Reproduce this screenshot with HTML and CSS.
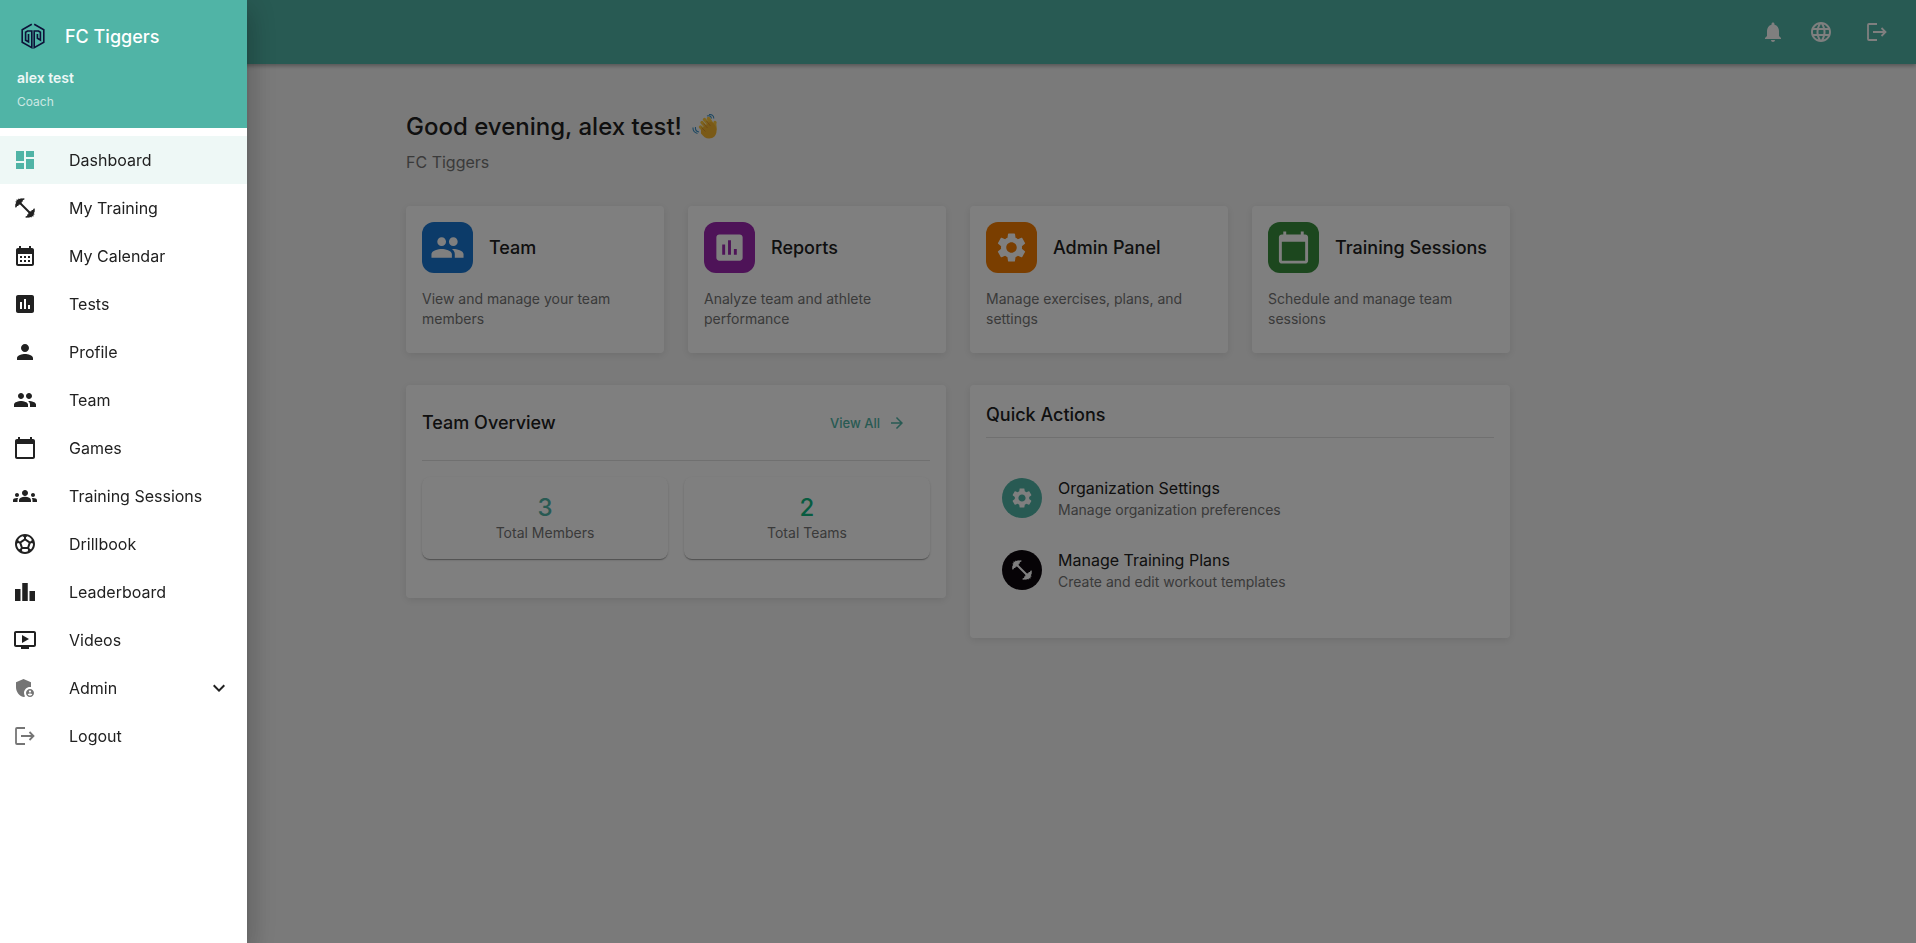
FILE: index.html
```
<!DOCTYPE html>
<html lang="en">
<head>
  <meta charset="UTF-8" />
  <meta name="viewport" content="width=device-width, initial-scale=1.0"/>
  <title>FC Tiggers</title>
  <link rel="stylesheet" href="styles.css">
</head>
<body>

  <!-- shared icons -->
  <svg class="sprite" aria-hidden="true">
    <symbol id="i-dashboard" viewBox="0 0 24 24"><path d="M3 13h8V3H3v10zm0 8h8v-6H3v6zm10 0h8V11h-8v10zm0-18v6h8V3h-8z"/></symbol>
    <symbol id="i-fitness" viewBox="0 0 24 24"><path d="M7 7 17 17" fill="none" stroke="currentColor" stroke-width="1.900"/><path d="M2.300 8.200 3.200 6.800 2.200 5.800 3.600 5.200 3.400 3.600 5 3.800 5.600 2.400 6.800 3 8 2.200 8.800 2.400 11.400 2.200 11.300 3.700 9.800 4.100 9.900 5.400 8.700 5.800 8.600 7.300 7.300 8.600 5.700 8.700 5.300 10 4 9.900 3.600 11.300 2.200 11.400z"/><path d="M21.700 15.800 20.800 17.200 21.800 18.200 20.400 18.800 20.600 20.400 19 20.200 18.400 21.600 17.200 21 16 21.800 15.200 21.600 12.600 21.800 12.700 20.300 14.200 19.900 14.100 18.600 15.300 18.200 15.400 16.700 16.700 15.400 18.300 15.300 18.700 14 20 14.100 20.400 12.700 21.800 12.600z"/></symbol>
    <symbol id="i-calendar-month" viewBox="0 0 24 24"><path d="M19 4h-1V2h-2v2H8V2H6v2H5c-1.110 0-1.990.9-1.990 2L3 20c0 1.100.89 2 2 2h14c1.100 0 2-.9 2-2V6c0-1.100-.9-2-2-2zm0 16H5V10h14v10zM9 14H7v-2h2v2zm4 0h-2v-2h2v2zm4 0h-2v-2h2v2zm-8 4H7v-2h2v2zm4 0h-2v-2h2v2zm4 0h-2v-2h2v2z"/></symbol>
    <symbol id="i-assessment" viewBox="0 0 24 24"><path d="M19 3H5c-1.100 0-2 .9-2 2v14c0 1.100.9 2 2 2h14c1.100 0 2-.9 2-2V5c0-1.100-.9-2-2-2zM9 17H7v-7h2v7zm4 0h-2V7h2v10zm4 0h-2v-4h2v4z"/></symbol>
    <symbol id="i-person" viewBox="0 0 24 24"><path d="M12 12c2.210 0 4-1.790 4-4s-1.790-4-4-4-4 1.790-4 4 1.790 4 4 4zm0 2c-2.670 0-8 1.340-8 4v2h16v-2c0-2.660-5.330-4-8-4z"/></symbol>
    <symbol id="i-people" viewBox="0 0 24 24"><path d="M16 11c1.660 0 2.990-1.340 2.990-3S17.660 5 16 5c-1.660 0-3 1.340-3 3s1.340 3 3 3zm-8 0c1.660 0 2.990-1.340 2.990-3S9.660 5 8 5C6.340 5 5 6.340 5 8s1.340 3 3 3zm0 2c-2.330 0-7 1.170-7 3.500V19h14v-2.500c0-2.330-4.670-3.500-7-3.500zm8 0c-.29 0-.62.02-.97.05 1.160.84 1.970 1.970 1.970 3.450V19h6v-2.500c0-2.330-4.670-3.500-7-3.500z"/></symbol>
    <symbol id="i-calendar" viewBox="0 0 24 24"><path d="M20 3h-1V1h-2v2H7V1H5v2H4c-1.100 0-2 .9-2 2v16c0 1.100.9 2 2 2h16c1.100 0 2-.9 2-2V5c0-1.100-.9-2-2-2zm0 18H4V8h16v13z"/></symbol>
    <symbol id="i-groups" viewBox="0 0 24 24"><path d="M12 12.750c1.630 0 3.070.39 4.240.9 1.080.48 1.760 1.560 1.760 2.730V18H6v-1.610c0-1.180.68-2.260 1.760-2.730 1.170-.52 2.610-.91 4.240-.91zM4 13c1.100 0 2-.9 2-2s-.9-2-2-2-2 .9-2 2 .9 2 2 2zm1.130 1.100c-.37-.06-.74-.1-1.130-.1-.99 0-1.930.21-2.780.58C.48 14.900 0 15.620 0 16.430V18h4.500v-1.610c0-.83.23-1.610.63-2.290zM20 13c1.100 0 2-.9 2-2s-.9-2-2-2-2 .9-2 2 .9 2 2 2zm4 3.430c0-.81-.48-1.530-1.220-1.850-.85-.37-1.790-.58-2.780-.58-.39 0-.76.04-1.130.1.400.68.630 1.460.630 2.290V18H24v-1.570zM12 6c1.660 0 3 1.340 3 3s-1.340 3-3 3-3-1.340-3-3 1.340-3 3-3z"/></symbol>
    <symbol id="i-soccer" viewBox="0 0 24 24"><path d="M12 2C6.480 2 2 6.480 2 12s4.480 10 10 10 10-4.480 10-10S17.520 2 12 2zm1 3.300l1.350-.95c1.820.56 3.370 1.760 4.380 3.340l-.39 1.340-1.350.46L13 6.700V5.300zm-3.350-.95L11 5.300v1.400L7.010 9.490l-1.350-.46-.39-1.340c1.010-1.570 2.560-2.770 4.380-3.340zM7.080 17.110l-1.140.1C4.730 15.810 4 13.990 4 12c0-.12.010-.23.020-.35l1-.73 1.380.48 1.460 4.340-.78 1.370zm7.420 2.480c-.79.26-1.630.41-2.500.41s-1.710-.15-2.500-.41l-.69-1.490.64-1.100h5.110l.64 1.110-.7 1.480zM14.270 15H9.730l-1.350-4.020L12 8.440l3.630 2.540L14.270 15zm3.790 2.210l-1.140-.1-.79-1.370 1.460-4.340 1.390-.47 1 .73c.01.11.02.22.02.34 0 1.990-.73 3.810-1.940 5.210z"/></symbol>
    <symbol id="i-leaderboard" viewBox="0 0 24 24"><path d="M2 9h5.500v12H2zM9.250 3h5.500v18h-5.500zM16.500 11H22v10h-5.500z"/></symbol>
    <symbol id="i-video" viewBox="0 0 24 24"><path d="M21 3H3c-1.110 0-2 .89-2 2v12c0 1.100.89 2 2 2h5v2h8v-2h5c1.100 0 1.990-.9 1.990-2L23 5c0-1.110-.9-2-2-2zm0 14H3V5h18v12zm-5-6l-7 4V7z"/></symbol>
    <symbol id="i-admin" viewBox="0 0 24 24"><path d="M17 11c.34 0 .67.04 1 .09V6.270L10.500 3 3 6.270v4.910c0 4.540 3.200 8.790 7.500 9.820.55-.13 1.080-.32 1.600-.55-.69-.98-1.100-2.170-1.100-3.450 0-3.310 2.690-6 6-6z"/><path d="M17 13c-2.210 0-4 1.790-4 4s1.790 4 4 4 4-1.790 4-4-1.790-4-4-4zm0 1.380c.62 0 1.120.51 1.120 1.120s-.51 1.120-1.120 1.120-1.120-.51-1.120-1.120.5-1.120 1.120-1.120zm0 5.370c-.93 0-1.740-.46-2.240-1.170.05-.72 1.510-1.080 2.240-1.080s2.190.36 2.240 1.080c-.5.71-1.310 1.170-2.240 1.170z"/></symbol>
    <symbol id="i-logout" viewBox="0 0 24 24"><path d="M12 4H4a1 1 0 0 0-1 1v14a1 1 0 0 0 1 1h8M8 12h12.500M16.500 8l4 4-4 4" fill="none" stroke="currentColor" stroke-width="1.800"/></symbol>
    <symbol id="i-chevron" viewBox="0 0 24 24"><path d="M7.410 8.590 12 13.170l4.590-4.580L18 10l-6 6-6-6 1.410-1.410z"/></symbol>
    <symbol id="i-bell" viewBox="0 0 24 24"><path d="M12 22c1.100 0 2-.9 2-2h-4c0 1.100.89 2 2 2zm6-6v-5c0-3.070-1.640-5.640-4.500-6.320V4c0-.83-.67-1.500-1.500-1.500s-1.500.67-1.500 1.500v.68C7.630 5.360 6 7.920 6 11v5l-2 2v1h16v-1l-2-2z"/></symbol>
    <symbol id="i-globe" viewBox="0 0 24 24"><path d="M11.990 2C6.470 2 2 6.480 2 12s4.470 10 9.990 10C17.520 22 22 17.520 22 12S17.520 2 11.990 2zm6.930 6h-2.950c-.32-1.250-.78-2.450-1.380-3.560 1.840.63 3.370 1.910 4.330 3.560zM12 4.040c.83 1.200 1.480 2.530 1.910 3.960h-3.820c.43-1.430 1.080-2.760 1.910-3.960zM4.260 14C4.100 13.360 4 12.690 4 12s.1-1.360.26-2h3.380c-.08.66-.14 1.320-.14 2s.06 1.340.14 2H4.260zm.82 2h2.950c.32 1.250.78 2.450 1.380 3.560-1.840-.63-3.370-1.900-4.330-3.560zm2.950-8H5.080c.96-1.660 2.490-2.930 4.330-3.560C8.810 5.550 8.350 6.750 8.030 8zM12 19.960c-.83-1.200-1.480-2.530-1.910-3.960h3.820c-.43 1.430-1.080 2.760-1.910 3.960zM14.340 14H9.660c-.09-.66-.16-1.320-.16-2s.07-1.350.16-2h4.680c.09.65.16 1.320.16 2s-.07 1.340-.16 2zm.25 5.560c.6-1.110 1.060-2.310 1.380-3.560h2.950c-.96 1.650-2.490 2.930-4.330 3.560zM16.360 14c.08-.66.14-1.320.14-2s-.06-1.340-.14-2h3.380c.16.64.26 1.310.26 2s-.1 1.360-.26 2h-3.380z"/></symbol>
    <symbol id="i-settings" viewBox="0 0 24 24"><path d="M19.140 12.940c.04-.3.06-.61.06-.94 0-.32-.02-.64-.07-.94l2.030-1.580c.18-.14.23-.41.12-.61l-1.920-3.320c-.12-.22-.37-.29-.59-.22l-2.390.96c-.5-.38-1.030-.7-1.620-.94l-.36-2.540c-.04-.24-.24-.41-.48-.41h-3.840c-.24 0-.43.17-.47.41l-.36 2.540c-.59.24-1.130.57-1.620.94l-2.390-.96c-.22-.08-.47 0-.59.22L2.740 8.870c-.12.21-.08.47.12.61l2.030 1.580c-.05.3-.09.63-.09.94s.02.64.07.94l-2.030 1.580c-.18.14-.23.41-.12.61l1.920 3.320c.12.22.37.29.59.22l2.390-.96c.5.38 1.030.7 1.620.94l.36 2.540c.05.24.24.41.48.41h3.840c.24 0 .44-.17.47-.41l.36-2.540c.59-.24 1.130-.56 1.620-.94l2.390.96c.22.08.47 0 .59-.22l1.920-3.320c.12-.22.07-.47-.12-.61l-2.010-1.580zM12 15.600c-1.980 0-3.600-1.620-3.600-3.600s1.620-3.600 3.600-3.600 3.600 1.620 3.600 3.600-1.620 3.600-3.600 3.600z"/></symbol>
    <symbol id="i-arrow" viewBox="0 0 24 24"><path d="M12 4l-1.410 1.410L16.170 11H4v2h12.170l-5.580 5.590L12 20l8-8z"/></symbol>
  </svg>

  <header class="topbar">
    <button class="icon-btn" aria-label="Notifications"><svg class="icon"><use href="#i-bell"/></svg></button>
    <button class="icon-btn" aria-label="Language"><svg class="icon"><use href="#i-globe"/></svg></button>
    <button class="icon-btn last" aria-label="Logout"><svg class="icon"><use href="#i-logout"/></svg></button>
  </header>

  <main class="container">
    <h1 class="greeting">Good evening, alex test!
      <svg class="wave" viewBox="0 0 26 26" aria-hidden="true">
        <g stroke="#ffc83d" stroke-width="3.400" stroke-linecap="round" fill="none">
          <path d="M10 8.500l6 7M12.500 5.500l6 7M16.500 4.500l5 8M8.500 13l6 6"/>
          <path d="M23 8.500c-1 2 .4 4 0 7"/>
        </g>
        <path d="M9 15l9-7.500c4 1 6.500 5 6.500 9.500 0 4.500-3 7.500-7.500 7.500-3.500 0-5.500-2-8-5z" fill="#f5b52e"/>
        <path d="M11.500 9.500l4 4.500M14.500 7l4 5M9.500 13.500l4 4" stroke="#d98a2b" stroke-width=".8" fill="none"/>
        <path d="M15 2c2-.8 4 .2 4.500 2.500M17 .6c3-.4 4.800 1.400 4.800 3.800M3.500 13c-.4 2.500 1 4.500 3.500 5M1 13.500c-.2 3 1.500 5.300 4.500 6" stroke="#3a8fc4" stroke-width="1.100" fill="none"/>
      </svg>
    </h1>
    <p class="org">FC Tiggers</p>

    <section class="tiles">
      <a class="card tile" href="#">
        <span class="tile-head"><span class="tile-icon blue"><svg class="icon"><use href="#i-people"/></svg></span><span class="card-title">Team</span></span>
        <span class="desc">View and manage your team members</span>
      </a>
      <a class="card tile" href="#">
        <span class="tile-head"><span class="tile-icon purple"><svg class="icon"><use href="#i-assessment"/></svg></span><span class="card-title">Reports</span></span>
        <span class="desc">Analyze team and athlete performance</span>
      </a>
      <a class="card tile" href="#">
        <span class="tile-head"><span class="tile-icon orange"><svg class="icon"><use href="#i-settings"/></svg></span><span class="card-title">Admin Panel</span></span>
        <span class="desc">Manage exercises, plans, and settings</span>
      </a>
      <a class="card tile" href="#">
        <span class="tile-head"><span class="tile-icon green"><svg class="icon"><use href="#i-calendar"/></svg></span><span class="card-title">Training Sessions</span></span>
        <span class="desc">Schedule and manage team sessions</span>
      </a>
    </section>

    <section class="panels">
      <div class="card overview">
        <div class="overview-head">
          <h2 class="card-title">Team Overview</h2>
          <a class="view-all" href="#">View All <svg class="icon"><use href="#i-arrow"/></svg></a>
        </div>
        <div class="stats">
          <div class="stat"><span class="stat-num">3</span><span class="stat-label">Total Members</span></div>
          <div class="stat"><span class="stat-num teams">2</span><span class="stat-label">Total Teams</span></div>
        </div>
      </div>

      <div class="card actions">
        <h2 class="card-title actions-head">Quick Actions</h2>
        <a class="action" href="#">
          <span class="round"><svg class="icon"><use href="#i-settings"/></svg></span>
          <span class="action-text"><span class="action-name">Organization Settings</span><span class="action-sub">Manage organization preferences</span></span>
        </a>
        <a class="action" href="#">
          <span class="round dark"><svg class="icon"><use href="#i-fitness"/></svg></span>
          <span class="action-text"><span class="action-name">Manage Training Plans</span><span class="action-sub">Create and edit workout templates</span></span>
        </a>
      </div>
    </section>
  </main>

  <div class="backdrop"></div>

  <aside class="drawer">
    <div class="drawer-head">
      <div class="brand">
        <svg class="logo" viewBox="0 0 24 26" fill="none" stroke="#0d1238" stroke-width="1.600" aria-hidden="true">
          <path d="M10.800 1.200 1.200 6.800v12.400l9.600 5.400V8H6.500L4.600 9.200v8l2.900 1.600V11"/>
          <path d="M13.200 1.200l9.600 5.600v12.400l-9.600 5.400V8h4.300l1.900 1.200v7.800l-3-1.800V11"/>
        </svg>
        <span class="brand-name">FC Tiggers</span>
      </div>
      <div class="user-name">alex test</div>
      <div class="user-role">Coach</div>
    </div>
    <nav class="menu">
      <a class="item active" href="#"><svg class="icon"><use href="#i-dashboard"/></svg>Dashboard</a>
      <a class="item" href="#"><svg class="icon"><use href="#i-fitness"/></svg>My Training</a>
      <a class="item" href="#"><svg class="icon"><use href="#i-calendar-month"/></svg>My Calendar</a>
      <a class="item" href="#"><svg class="icon"><use href="#i-assessment"/></svg>Tests</a>
      <a class="item" href="#"><svg class="icon"><use href="#i-person"/></svg>Profile</a>
      <a class="item" href="#"><svg class="icon"><use href="#i-people"/></svg>Team</a>
      <a class="item" href="#"><svg class="icon"><use href="#i-calendar"/></svg>Games</a>
      <a class="item" href="#"><svg class="icon"><use href="#i-groups"/></svg>Training Sessions</a>
      <a class="item" href="#"><svg class="icon"><use href="#i-soccer"/></svg>Drillbook</a>
      <a class="item" href="#"><svg class="icon"><use href="#i-leaderboard"/></svg>Leaderboard</a>
      <a class="item" href="#"><svg class="icon"><use href="#i-video"/></svg>Videos</a>
      <button class="item muted" aria-expanded="false"><svg class="icon"><use href="#i-admin"/></svg>Admin<svg class="icon chevron"><use href="#i-chevron"/></svg></button>
      <button class="item muted"><svg class="icon"><use href="#i-logout"/></svg>Logout</button>
    </nav>
  </aside>

</body>
</html>
```
FILE: styles.css
```
* {
  box-sizing: border-box;
}
body {
  margin: 0;
  min-height: 100vh;
  font-family: Inter, sans-serif;
  font-size: 16px;
  background: #f5f5f5;
  color: #212121;
}
a {
  color: inherit;
  text-decoration: none;
}
button {
  font: inherit;
  color: inherit;
  background: none;
  border: none;
  cursor: pointer;
}
.sprite {
  display: none;
}
.icon {
  width: 24px;
  height: 24px;
  fill: currentColor;
  flex-shrink: 0;
}

/* top bar */
.topbar {
  display: flex;
  justify-content: flex-end;
  align-items: center;
  height: 64px;
  padding: 0 15px;
  background: #50b4a6;
  color: #fff;
  box-shadow: 0 2px 4px rgba(0, 0, 0, 0.3);
}
.icon-btn {
  display: flex;
  justify-content: center;
  width: 48px;
  padding: 12px 0;
}
.icon-btn.last {
  margin-left: 8px;
}

/* page */
.container {
  max-width: 1152px;
  margin: 0 auto;
  padding: 48px 24px;
}
.greeting {
  display: flex;
  align-items: center;
  gap: 10px;
  margin: 0;
  font-size: 24px;
  line-height: 30px;
  font-weight: 500;
}
.wave {
  width: 26px;
  height: 26px;
}
.org {
  margin: 8px 0 32px;
  line-height: 24px;
  color: #757575;
}
.card {
  background: #fff;
  border-radius: 4px;
  padding: 16px;
  box-shadow: 0 2px 8px rgba(0, 0, 0, 0.1);
}
.card-title {
  margin: 0;
  font-size: 18px;
  line-height: 28px;
  font-weight: 500;
}
.tiles {
  display: grid;
  grid-template-columns: repeat(4, 1fr);
  gap: 24px;
}
.tile {
  padding-bottom: 24px;
}
.tile-head {
  display: flex;
  align-items: center;
  gap: 16px;
  margin-bottom: 16px;
}
.tile-icon {
  display: flex;
  padding: 8px;
  border-radius: 12px;
  color: #fff;
}
.tile-icon .icon {
  width: 35px;
  height: 35px;
}
.blue { background: #1976d2; }
.purple { background: #9c27b0; }
.orange { background: #f57c00; }
.green { background: #388e3c; }
.desc {
  display: block;
  font-size: 14px;
  line-height: 20px;
  color: #757575;
}

.panels {
  display: grid;
  grid-template-columns: 1fr 1fr;
  align-items: start;
  gap: 24px;
  margin-top: 32px;
}
.overview {
  padding-bottom: 39px;
}
.overview-head {
  display: flex;
  justify-content: space-between;
  align-items: center;
  height: 60px;
  padding-bottom: 16px;
  border-bottom: 1px solid #e0e0e0;
}
.view-all {
  display: flex;
  align-items: center;
  gap: 8px;
  padding-right: 24px;
  font-size: 13px;
  font-weight: 500;
  color: #50b4a6;
}
.view-all .icon {
  width: 18px;
  height: 18px;
}
.stats {
  display: grid;
  grid-template-columns: 1fr 1fr;
  gap: 16px;
  margin-top: 16px;
}
.stat {
  display: flex;
  flex-direction: column;
  align-items: center;
  padding: 16px;
  border-radius: 8px;
  box-shadow: 0 2px 1px -1px rgba(0, 0, 0, 0.2), 0 1px 1px rgba(0, 0, 0, 0.14), 0 1px 3px rgba(0, 0, 0, 0.12);
}
.stat-num {
  font-size: 24px;
  line-height: 30px;
  font-weight: 500;
  color: #50b4a6;
}
.stat-num.teams {
  color: #10b981;
}
.stat-label {
  font-size: 14px;
  line-height: 20px;
  color: #757575;
}

.actions {
  padding-bottom: 32px;
}
.actions-head {
  padding-bottom: 8px;
  margin-bottom: 24px;
  border-bottom: 1px solid #e0e0e0;
}
.action {
  display: flex;
  align-items: center;
  gap: 16px;
  height: 72px;
  padding: 0 16px;
}
.round {
  display: flex;
  padding: 8px;
  border-radius: 50%;
  background: #50b4a6;
  color: #fff;
}
.round.dark {
  background: #0d070d;
}
.action-name,
.action-sub {
  display: block;
}
.action-name {
  line-height: 24px;
}
.action-sub {
  font-size: 14px;
  line-height: 20px;
  color: #757575;
}

/* drawer */
.backdrop {
  position: fixed;
  inset: 0;
  background: rgba(0, 0, 0, 0.5);
}
.drawer {
  position: fixed;
  top: 0;
  bottom: 0;
  left: 0;
  width: 247px;
  background: #fff;
  box-shadow: 0 8px 10px -5px rgba(0, 0, 0, 0.2), 0 16px 24px 2px rgba(0, 0, 0, 0.14), 0 6px 30px 5px rgba(0, 0, 0, 0.12);
}
.drawer-head {
  height: 128px;
  padding: 16px 17px;
  background: #50b4a6;
  color: #fff;
}
.brand {
  display: flex;
  align-items: center;
  gap: 20px;
  height: 40px;
  padding-left: 4px;
}
.logo {
  width: 24px;
  height: 26px;
}
.brand-name {
  font-size: 18px;
  font-weight: 500;
}
.user-name {
  margin-top: 12px;
  font-size: 14px;
  line-height: 20px;
  font-weight: 600;
  opacity: 0.9;
}
.user-role {
  margin-top: 4px;
  font-size: 12px;
  line-height: 20px;
  opacity: 0.7;
}
.menu {
  padding: 8px 0;
}
.item {
  display: flex;
  align-items: center;
  gap: 32px;
  width: 100%;
  height: 48px;
  padding: 0 16px 0 13px;
  text-align: left;
}
.item.active {
  background: #eef8f6;
}
.item.active .icon {
  color: #50b4a6;
}
.item.muted .icon {
  color: #757575;
}
.item .chevron {
  margin-left: auto;
}
.item.muted .chevron {
  color: #212121;
}
```
